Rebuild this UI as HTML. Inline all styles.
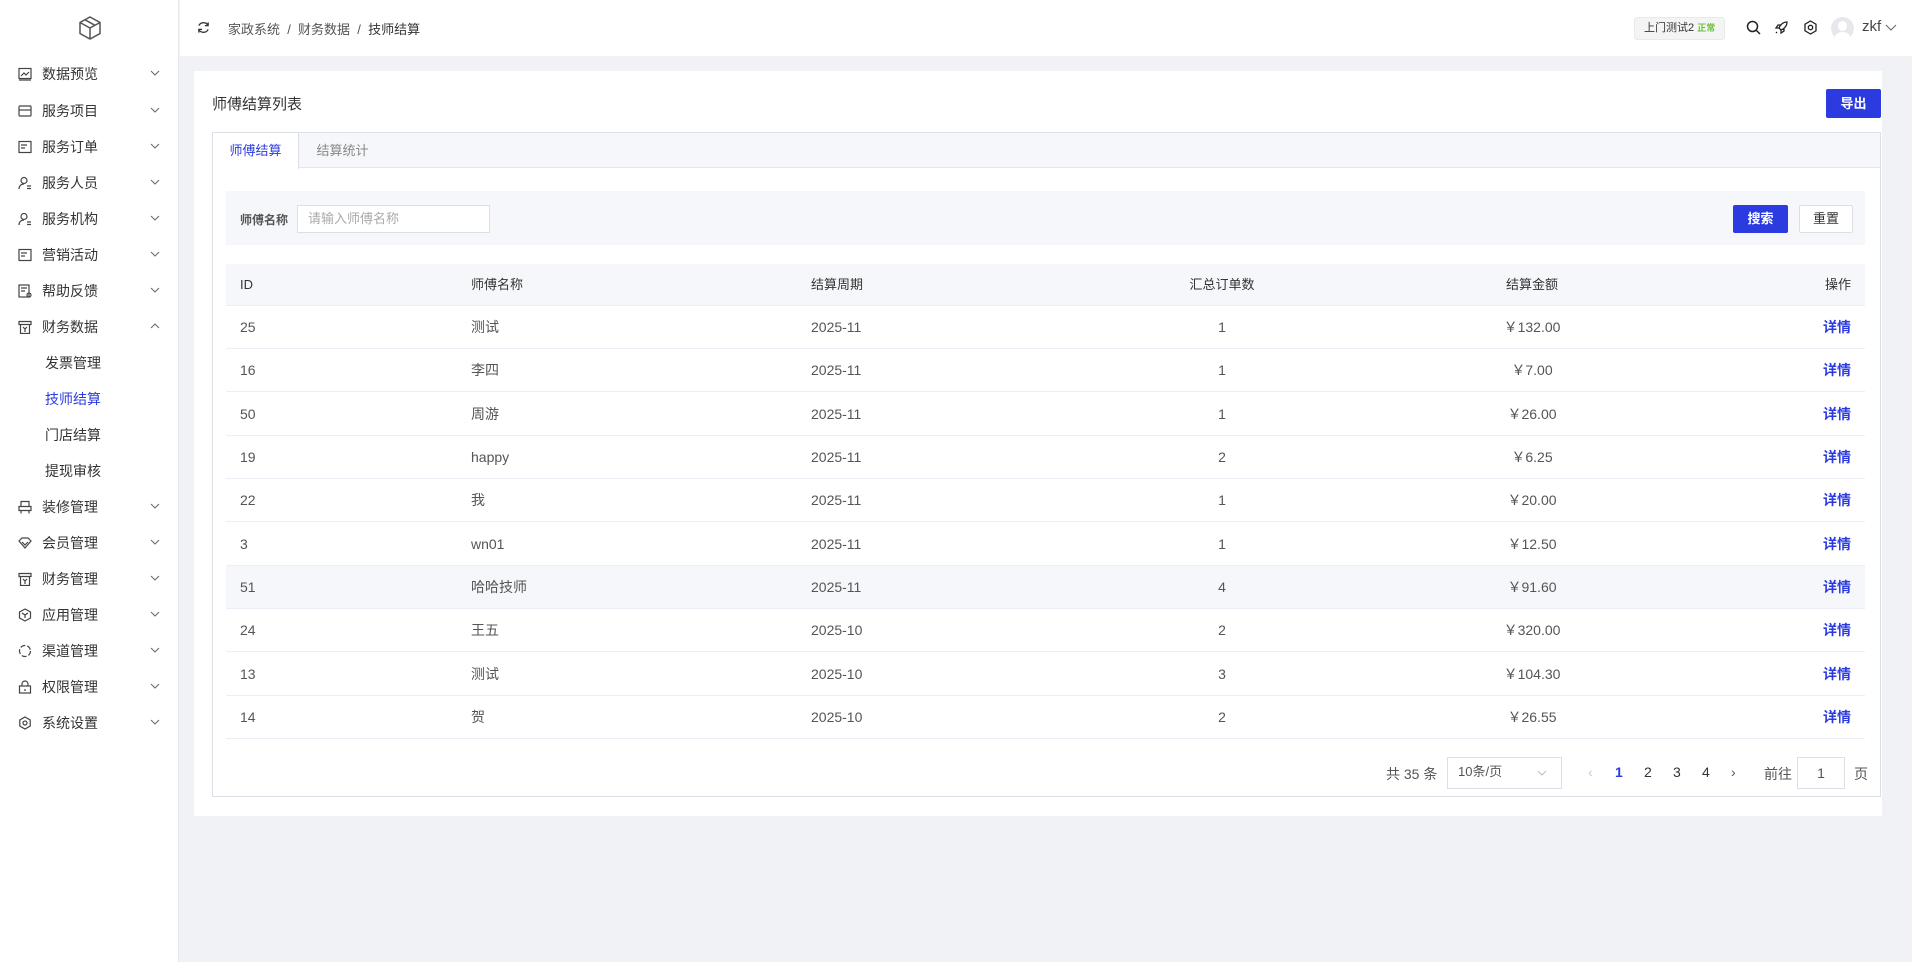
<!DOCTYPE html>
<html><head><meta charset="utf-8"><style>
*{box-sizing:border-box;margin:0;padding:0}
body{width:1912px;height:962px;background:#f0f2f5;font-family:"Liberation Sans","Noto Sans CJK SC",sans-serif;color:#333;font-size:14px;position:relative;overflow:hidden}
.side{position:absolute;left:0;top:0;width:179px;height:962px;background:#fff;border-right:1px solid #e8e8ec}
.logo{position:absolute;left:77px;top:15px}
.mi{position:absolute;left:0;width:179px;height:36px;line-height:36px;font-size:14px;color:#333}
.mi .ic{position:absolute;left:18px;top:11px;width:14px;height:14px}
.mi .t{position:absolute;left:42px}
.mi .ar{position:absolute;left:150px;top:10px}
.sub{position:absolute;left:45px;font-size:14px;line-height:36px;height:36px}
.hdr{position:absolute;left:180px;top:0;right:0;height:56px;background:#fff}
.card{position:absolute;left:194px;top:71px;width:1688px;height:745px;background:#fff}
.abs{position:absolute}
.row{position:absolute;left:226px;width:1639px;height:43px;border-bottom:1px solid #ebeef5;font-size:14px;color:#555}
.row span{position:absolute;top:0;line-height:43px}
.c1{left:14px}.c2{left:245px}.c3{left:585px}.c4{left:996px;width:0;text-align:center;white-space:nowrap}
.c4 i{font-style:normal;display:inline-block;transform:translateX(-50%)}
.c5{left:1306px;width:0}
.c5 i{font-style:normal;display:inline-block;transform:translateX(-50%);white-space:nowrap}
.c6{right:14px;color:#2b3be0;font-weight:bold}
.pg{position:absolute;top:764px;font-size:14px;color:#555}
</style></head><body>
<div class="side">
<svg class="logo" width="26" height="26" viewBox="0 0 26 26" fill="none" stroke="#555" stroke-width="1.5"><path d="M13 2L23 7.5V18.5L13 24L3 18.5V7.5Z M3 7.5L13 13L23 7.5 M13 13V24 M8 4.8L18 10.3"/></svg>
<div class="mi" style="top:56px"><svg class="ic" viewBox="0 0 14 14" fill="none" stroke="#444" stroke-width="1.2"><rect x="1" y="1.5" width="12" height="10"/><path d="M3 9l3-3 2 2 3-3M1 13h12"/></svg><span class="t">数据预览</span><svg class="ar" width="10" height="14" viewBox="0 0 10 14" fill="none" stroke="#666"><path d="M1 5l4 4 4-4"/></svg></div>
<div class="mi" style="top:93px"><svg class="ic" viewBox="0 0 14 14" fill="none" stroke="#444" stroke-width="1.2"><rect x="1" y="2" width="12" height="10" rx="1"/><path d="M1 6h12"/></svg><span class="t">服务项目</span><svg class="ar" width="10" height="14" viewBox="0 0 10 14" fill="none" stroke="#666"><path d="M1 5l4 4 4-4"/></svg></div>
<div class="mi" style="top:129px"><svg class="ic" viewBox="0 0 14 14" fill="none" stroke="#444" stroke-width="1.2"><rect x="1" y="1.5" width="12" height="11"/><path d="M3 5h6M3 8h4"/></svg><span class="t">服务订单</span><svg class="ar" width="10" height="14" viewBox="0 0 10 14" fill="none" stroke="#666"><path d="M1 5l4 4 4-4"/></svg></div>
<div class="mi" style="top:165px"><svg class="ic" viewBox="0 0 14 14" fill="none" stroke="#444" stroke-width="1.2"><circle cx="6" cy="4.5" r="3"/><path d="M1 13c0-3 2-5 5-5M9 10h4M9 12.5h4"/></svg><span class="t">服务人员</span><svg class="ar" width="10" height="14" viewBox="0 0 10 14" fill="none" stroke="#666"><path d="M1 5l4 4 4-4"/></svg></div>
<div class="mi" style="top:201px"><svg class="ic" viewBox="0 0 14 14" fill="none" stroke="#444" stroke-width="1.2"><circle cx="6" cy="4.5" r="3"/><path d="M1 13c0-3 2-5 5-5M9 10h4M9 12.5h4"/></svg><span class="t">服务机构</span><svg class="ar" width="10" height="14" viewBox="0 0 10 14" fill="none" stroke="#666"><path d="M1 5l4 4 4-4"/></svg></div>
<div class="mi" style="top:237px"><svg class="ic" viewBox="0 0 14 14" fill="none" stroke="#444" stroke-width="1.2"><rect x="1" y="1.5" width="12" height="11"/><path d="M3 5h6M3 8h4"/></svg><span class="t">营销活动</span><svg class="ar" width="10" height="14" viewBox="0 0 10 14" fill="none" stroke="#666"><path d="M1 5l4 4 4-4"/></svg></div>
<div class="mi" style="top:273px"><svg class="ic" viewBox="0 0 14 14" fill="none" stroke="#444" stroke-width="1.2"><rect x="1" y="1" width="10" height="12"/><path d="M3 4h6M3 7h4"/><circle cx="11" cy="11" r="2"/></svg><span class="t">帮助反馈</span><svg class="ar" width="10" height="14" viewBox="0 0 10 14" fill="none" stroke="#666"><path d="M1 5l4 4 4-4"/></svg></div>
<div class="mi" style="top:309px"><svg class="ic" viewBox="0 0 14 14" fill="none" stroke="#444" stroke-width="1.2"><path d="M1 1.5h12v3H1zM2.5 4.5v9h9v-9M5 7l2 2 2-2M7 9v3"/></svg><span class="t">财务数据</span><svg class="ar" width="10" height="14" viewBox="0 0 10 14" fill="none" stroke="#666"><path d="M1 9l4-4 4 4"/></svg></div>
<div class="sub" style="top:345px">发票管理</div>
<div class="sub" style="top:381px;color:#2b3be0">技师结算</div>
<div class="sub" style="top:417px">门店结算</div>
<div class="sub" style="top:453px">提现审核</div>
<div class="mi" style="top:489px"><svg class="ic" viewBox="0 0 14 14" fill="none" stroke="#444" stroke-width="1.2"><path d="M3 1.5h8v5H3zM1 6.5h12v4H1zM3 10.5v3M11 10.5v3"/></svg><span class="t">装修管理</span><svg class="ar" width="10" height="14" viewBox="0 0 10 14" fill="none" stroke="#666"><path d="M1 5l4 4 4-4"/></svg></div>
<div class="mi" style="top:525px"><svg class="ic" viewBox="0 0 14 14" fill="none" stroke="#444" stroke-width="1.2"><path d="M1 5l3-3h6l3 3-6 7z M4 6l3 3 3-3"/></svg><span class="t">会员管理</span><svg class="ar" width="10" height="14" viewBox="0 0 10 14" fill="none" stroke="#666"><path d="M1 5l4 4 4-4"/></svg></div>
<div class="mi" style="top:561px"><svg class="ic" viewBox="0 0 14 14" fill="none" stroke="#444" stroke-width="1.2"><path d="M1 1.5h12v3H1zM2.5 4.5v9h9v-9M5 7l2 2 2-2M7 9v3"/></svg><span class="t">财务管理</span><svg class="ar" width="10" height="14" viewBox="0 0 10 14" fill="none" stroke="#666"><path d="M1 5l4 4 4-4"/></svg></div>
<div class="mi" style="top:597px"><svg class="ic" viewBox="0 0 14 14" fill="none" stroke="#444" stroke-width="1.2"><path d="M7 1l5.5 3v6L7 13 1.5 10V4z M4 5l3 2 3-2M7 7v3"/></svg><span class="t">应用管理</span><svg class="ar" width="10" height="14" viewBox="0 0 10 14" fill="none" stroke="#666"><path d="M1 5l4 4 4-4"/></svg></div>
<div class="mi" style="top:633px"><svg class="ic" viewBox="0 0 14 14" fill="none" stroke="#444" stroke-width="1.2" stroke-dasharray="5 2"><circle cx="7" cy="7" r="5.5"/></svg><span class="t">渠道管理</span><svg class="ar" width="10" height="14" viewBox="0 0 10 14" fill="none" stroke="#666"><path d="M1 5l4 4 4-4"/></svg></div>
<div class="mi" style="top:669px"><svg class="ic" viewBox="0 0 14 14" fill="none" stroke="#444" stroke-width="1.2"><rect x="1.5" y="6" width="11" height="7"/><path d="M4 6V4a3 3 0 0 1 6 0v2M7 9v2"/></svg><span class="t">权限管理</span><svg class="ar" width="10" height="14" viewBox="0 0 10 14" fill="none" stroke="#666"><path d="M1 5l4 4 4-4"/></svg></div>
<div class="mi" style="top:705px"><svg class="ic" viewBox="0 0 14 14" fill="none" stroke="#444" stroke-width="1.2"><path d="M7 1l5.2 3v6L7 13 1.8 10V4z"/><circle cx="7" cy="7" r="2"/></svg><span class="t">系统设置</span><svg class="ar" width="10" height="14" viewBox="0 0 10 14" fill="none" stroke="#666"><path d="M1 5l4 4 4-4"/></svg></div>
</div>

<div class="hdr">
<svg class="abs" style="left:17px;top:21px" width="13" height="13" viewBox="0 0 14 14" fill="none" stroke="#333" stroke-width="1.4"><path d="M12 5A5.5 5.5 0 0 0 2 5M2 9a5.5 5.5 0 0 0 10 0M12 1.5V5H8.5M2 12.5V9h3.5"/></svg>
<div class="abs" style="left:48px;top:19px;font-size:13px;color:#555">家政系统 &nbsp;/&nbsp; 财务数据 &nbsp;/&nbsp; <span style="color:#333">技师结算</span></div>
<div class="abs" style="left:1454px;top:17px;width:91px;height:23px;background:#f4f4f5;border:1px solid #e9e9eb;border-radius:3px;font-size:11px;line-height:21px;padding-left:9px;color:#333">上门测试2 <span style="color:#67c23a;font-size:9px;font-weight:bold">正常</span></div>
<svg class="abs" style="left:1566px;top:20px" width="15" height="15" viewBox="0 0 15 15" fill="none" stroke="#222" stroke-width="1.5"><circle cx="6.5" cy="6.5" r="5"/><path d="M10 10l4 4"/></svg>
<svg class="abs" style="left:1594px;top:20px" width="15" height="15" viewBox="0 0 15 15" fill="none" stroke="#222" stroke-width="1.3"><path d="M13 2c-4 0-7 3-8 6l2 2c3-1 6-4 6-8zM5 8L2 8l2-3h3M7 10v3l3-2V8M3 12l-1 1"/></svg>
<svg class="abs" style="left:1623px;top:20px" width="15" height="15" viewBox="0 0 15 15" fill="none" stroke="#222" stroke-width="1.3"><path d="M7.5 1l5.5 3.2v6.6L7.5 14 2 10.8V4.2z"/><circle cx="7.5" cy="7.5" r="2.2"/></svg>
<div class="abs" style="left:1651px;top:17px;width:23px;height:23px;border-radius:50%;background:#e6e8ee;overflow:hidden"><div style="position:absolute;left:7px;top:4px;width:9px;height:10px;border-radius:50%;background:#fff"></div><div style="position:absolute;left:4px;top:15px;width:15px;height:10px;border-radius:50%;background:#fff"></div></div>
<div class="abs" style="left:1682px;top:18px;font-size:15px;color:#444">zkf</div>
<svg class="abs" style="left:1705px;top:22px" width="12" height="10" viewBox="0 0 12 10" fill="none" stroke="#666"><path d="M1 3l5 5 5-5"/></svg>
</div>

<div class="card"></div>
<div class="abs" style="left:212px;top:93px;font-size:15px;color:#333">师傅结算列表</div>
<div class="abs" style="left:1826px;top:89px;width:55px;height:29px;background:#2b3be0;border-radius:2px;color:#fff;font-size:13px;font-weight:bold;text-align:center;line-height:29px">导出</div>
<div class="abs" style="left:212px;top:132px;width:1669px;height:665px;border:1px solid #dcdfe6"></div>
<div class="abs" style="left:213px;top:133px;width:1667px;height:35px;background:#f5f7fa;border-bottom:1px solid #e4e7ed"></div>
<div class="abs" style="left:213px;top:133px;width:86px;height:36px;background:#fff;border-right:1px solid #dcdfe6;color:#2b3be0;font-size:13px;text-align:center;line-height:35px">师傅结算</div>
<div class="abs" style="left:299px;top:133px;width:87px;height:35px;color:#888;font-size:13px;text-align:center;line-height:35px">结算统计</div>

<div class="abs" style="left:226px;top:191px;width:1639px;height:54px;background:#f5f7fa"></div>
<div class="abs" style="left:240px;top:211px;font-size:12px;font-weight:bold;color:#555">师傅名称</div>
<div class="abs" style="left:297px;top:205px;width:193px;height:28px;background:#fff;border:1px solid #dcdfe6;font-size:13px;color:#aaa;line-height:26px;padding-left:10px">请输入师傅名称</div>
<div class="abs" style="left:1733px;top:205px;width:55px;height:28px;background:#2b3be0;color:#fff;font-size:13px;font-weight:bold;text-align:center;line-height:28px;border-radius:2px">搜索</div>
<div class="abs" style="left:1799px;top:205px;width:54px;height:28px;background:#fff;border:1px solid #dcdfe6;color:#333;font-size:13px;text-align:center;line-height:26px;border-radius:2px">重置</div>

<div class="row" style="top:264px;height:42px;background:#f5f7fa;color:#333;font-size:13px"><span class="c1" style="line-height:42px">ID</span><span class="c2" style="line-height:42px">师傅名称</span><span class="c3" style="line-height:42px">结算周期</span><span class="c4" style="line-height:42px"><i>汇总订单数</i></span><span class="c5" style="line-height:42px"><i>结算金额</i></span><span class="c6" style="line-height:42px;color:#333;font-weight:normal">操作</span></div>
<div class="row" style="top:306px"><span class="c1">25</span><span class="c2">测试</span><span class="c3">2025-11</span><span class="c4"><i>1</i></span><span class="c5"><i>￥132.00</i></span><span class="c6">详情</span></div>
<div class="row" style="top:349px"><span class="c1">16</span><span class="c2">李四</span><span class="c3">2025-11</span><span class="c4"><i>1</i></span><span class="c5"><i>￥7.00</i></span><span class="c6">详情</span></div>
<div class="row" style="top:393px"><span class="c1">50</span><span class="c2">周游</span><span class="c3">2025-11</span><span class="c4"><i>1</i></span><span class="c5"><i>￥26.00</i></span><span class="c6">详情</span></div>
<div class="row" style="top:436px"><span class="c1">19</span><span class="c2">happy</span><span class="c3">2025-11</span><span class="c4"><i>2</i></span><span class="c5"><i>￥6.25</i></span><span class="c6">详情</span></div>
<div class="row" style="top:479px"><span class="c1">22</span><span class="c2">我</span><span class="c3">2025-11</span><span class="c4"><i>1</i></span><span class="c5"><i>￥20.00</i></span><span class="c6">详情</span></div>
<div class="row" style="top:523px"><span class="c1">3</span><span class="c2">wn01</span><span class="c3">2025-11</span><span class="c4"><i>1</i></span><span class="c5"><i>￥12.50</i></span><span class="c6">详情</span></div>
<div class="row" style="top:566px;background:#f5f7fa"><span class="c1">51</span><span class="c2">哈哈技师</span><span class="c3">2025-11</span><span class="c4"><i>4</i></span><span class="c5"><i>￥91.60</i></span><span class="c6">详情</span></div>
<div class="row" style="top:609px"><span class="c1">24</span><span class="c2">王五</span><span class="c3">2025-10</span><span class="c4"><i>2</i></span><span class="c5"><i>￥320.00</i></span><span class="c6">详情</span></div>
<div class="row" style="top:653px"><span class="c1">13</span><span class="c2">测试</span><span class="c3">2025-10</span><span class="c4"><i>3</i></span><span class="c5"><i>￥104.30</i></span><span class="c6">详情</span></div>
<div class="row" style="top:696px"><span class="c1">14</span><span class="c2">贺</span><span class="c3">2025-10</span><span class="c4"><i>2</i></span><span class="c5"><i>￥26.55</i></span><span class="c6">详情</span></div>

<div class="pg" style="left:1386px">共 35 条</div>
<div class="abs" style="left:1447px;top:757px;width:115px;height:32px;border:1px solid #dcdfe6;font-size:13px;color:#555;line-height:28px;padding-left:10px">10条/页<svg style="position:absolute;right:14px;top:12px" width="10" height="7" viewBox="0 0 10 7" fill="none" stroke="#bbb"><path d="M1 1l4 4 4-4"/></svg></div>
<div class="pg" style="left:1588px;color:#ccc">‹</div>
<div class="pg" style="left:1615px;color:#2b3be0;font-weight:bold">1</div>
<div class="pg" style="left:1644px;color:#333">2</div>
<div class="pg" style="left:1673px;color:#333">3</div>
<div class="pg" style="left:1702px;color:#333">4</div>
<div class="pg" style="left:1731px">›</div>
<div class="pg" style="left:1764px">前往</div>
<div class="abs" style="left:1797px;top:757px;width:48px;height:32px;border:1px solid #dcdfe6;font-size:14px;color:#555;text-align:center;line-height:30px">1</div>
<div class="pg" style="left:1854px">页</div>
</body></html>
